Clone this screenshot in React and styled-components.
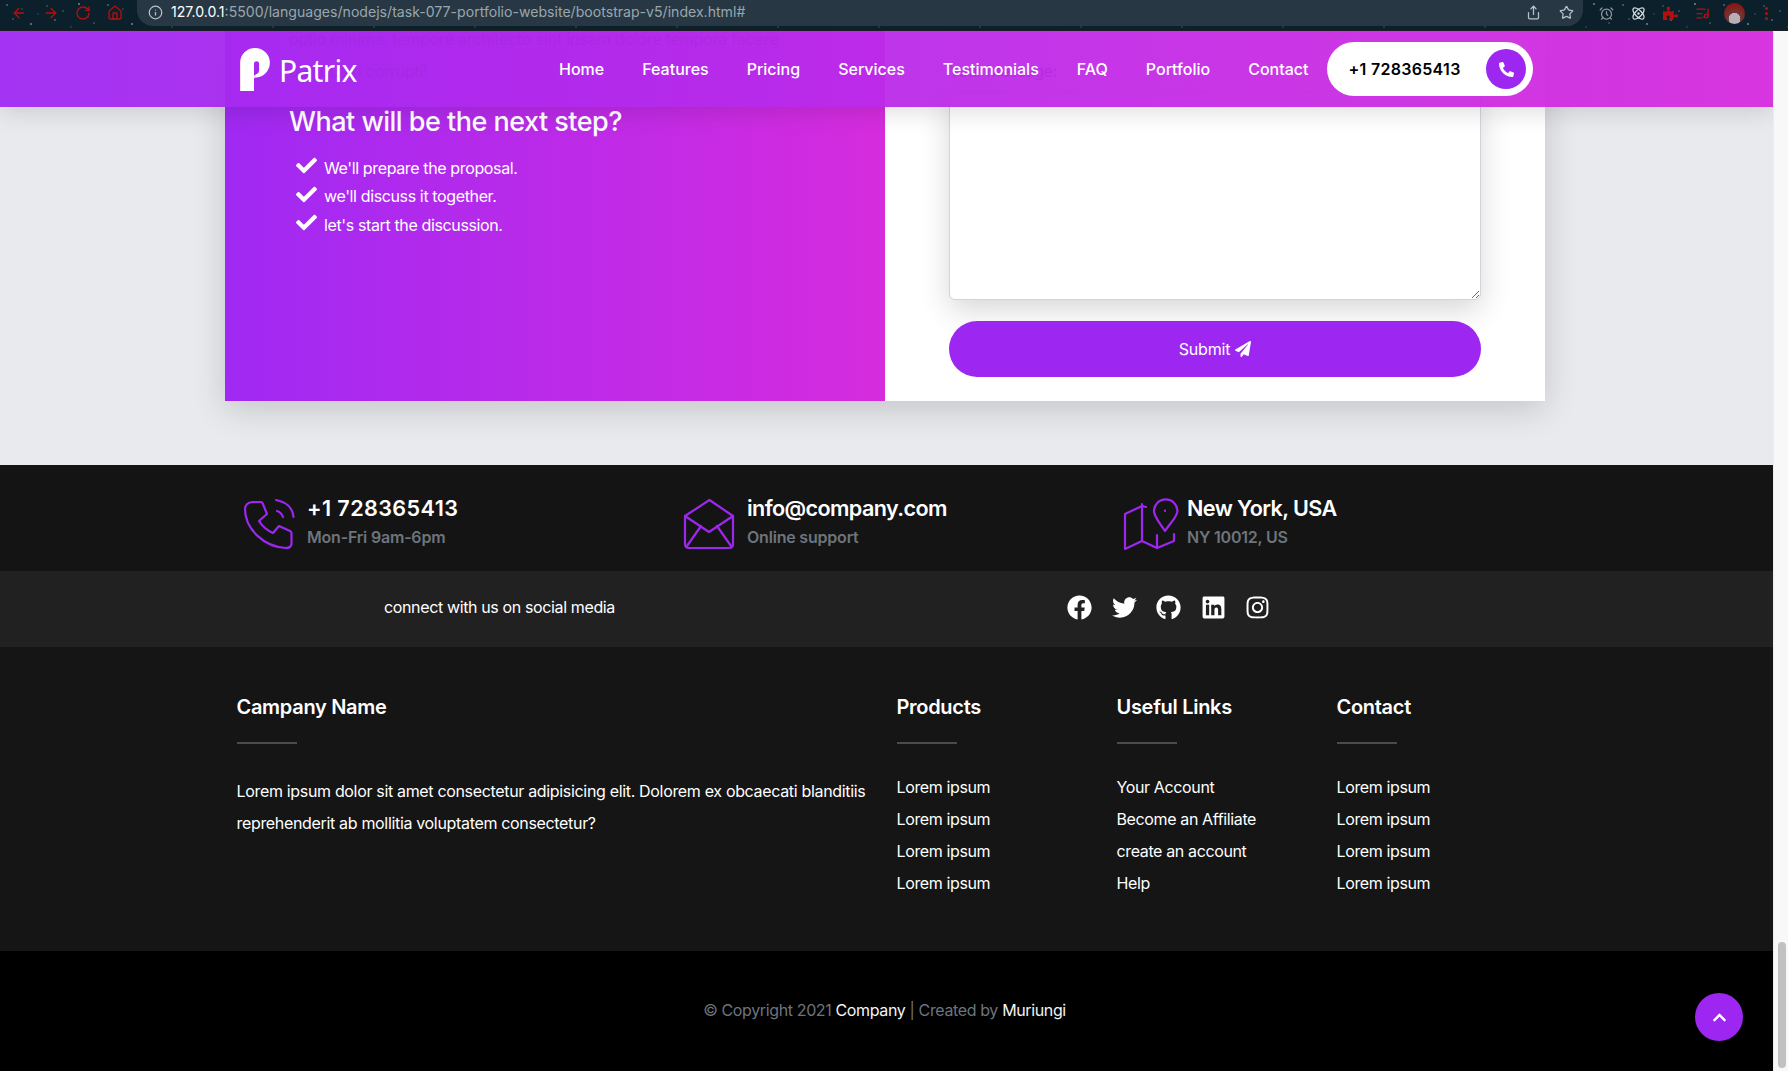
import React from "react";
import styled, { createGlobalStyle } from "styled-components";
import {
  ArrowLeft, ArrowRight, RotateCw, Home, Info, Share, Star, AlarmClock, Atom, ListMusic,
} from "lucide-react";
import {
  FaCheck, FaFacebook, FaTwitter, FaGithub, FaLinkedin, FaInstagram, FaPaperPlane, FaPhoneAlt, FaChevronUp, FaPuzzlePiece,
} from "react-icons/fa";

const Global = createGlobalStyle`
  html, body { margin: 0; padding: 0; background: #e9eaee; }
  body { font-family: Inter, "Liberation Sans", sans-serif; font-size: 16px; line-height: 1.5; color: #fff; letter-spacing: -0.37px; }
  * { box-sizing: border-box; }
`;

const Window = styled.div`
  height: 1071px;
  width: 1788px;
  display: flex;
  flex-direction: column;
  overflow: hidden;
`;

const stars = [
  [7,5],[13,19],[22,9],[31,24],[38,14],[47,6],[55,20],[63,11],[71,27],[79,4],[88,17],[94,23],
].map(([x,y],i)=>`radial-gradient(${i%3===0?1.3:0.9}px ${i%3===0?1.3:0.9}px at ${x}px ${y}px, ${i%2?"#a9c6d6":"#6f93a6"}, transparent)`).join(",");

const BrowserBar = styled.header`
  height: 31px;
  flex: none;
  display: flex;
  align-items: flex-start;
  border-bottom: 1px solid #1c1c24;
  background-color: #0c202c;
  background-image: ${stars};
  background-size: 101px 31px;
`;

const NavIcons = styled.div`
  width: 137px;
  flex: none;
  height: 26px;
  padding-left: 11px;
  display: flex;
  align-items: center;
  gap: 16px;
  color: #b40f0f;
  svg { width: 16px; height: 16px; }
`;

const UrlPill = styled.div`
  flex: none;
  width: 1446px;
  height: 26px;
  background: #273844;
  border-radius: 0 0 16px 16px;
  display: flex;
  align-items: center;
  padding: 0 10px 2px 11px;
  color: #b9c2c7;
  svg { width: 15px; height: 15px; flex: none; }
`;

const Url = styled.div`
  margin-left: 8px;
  font-size: 14.1px;
  letter-spacing: 0;
  color: #9aa6ad;
  flex: 1;
  white-space: nowrap;
`;

const UrlHost = styled.span`
  color: #fff;
`;

const PillActions = styled.div`
  display: flex;
  gap: 18px;
  align-items: center;
  margin-right: -1px;
`;

const Extensions = styled.div`
  flex: 1;
  height: 26px;
  display: flex;
  align-items: center;
  padding-left: 16px;
  gap: 17px;
  svg { width: 15px; height: 15px; flex: none; }
`;

const Ext = styled.span`
  display: flex;
  color: ${(p) => p.$color};
`;

const Avatar = styled.span`
  width: 21px;
  height: 21px;
  margin-left: -3px;
  border-radius: 50%;
  background: radial-gradient(circle at 50% 75%, #b9aeb6 0 30%, #6b3a3a 32%, #8f1414 75%);
  flex: none;
`;

const Dots = styled.span`
  display: flex;
  flex-direction: column;
  gap: 2px;
  margin-left: 3px;
`;

const Dot = styled.i`
  display: block;
  width: 3px;
  height: 3px;
  border-radius: 50%;
  background: #b40f0f;
`;

const Viewport = styled.div`
  flex: 1;
  display: flex;
  min-height: 0;
`;

const PageArea = styled.div`
  position: relative;
  width: 1773px;
  flex: none;
  overflow: hidden;
`;

const Scrollbar = styled.div`
  flex: 1;
  background: #f8f8f8;
  border-left: 1px solid #ececec;
  display: flex;
  justify-content: center;
  align-items: flex-end;
  padding: 0 0 3px 1px;
`;

const Thumb = styled.div`
  width: 8px;
  height: 126px;
  border-radius: 4px;
  background: #c1c1c1;
`;

const Navbar = styled.nav`
  position: absolute;
  z-index: 5;
  top: 0;
  left: 0;
  right: 0;
  height: 76px;
  padding: 0 12px 0 240px;
  display: flex;
  align-items: center;
  background: linear-gradient(90deg, rgba(160, 41, 243, 0.95), rgba(214, 44, 222, 0.95));
  box-shadow: 0 4px 24px rgba(0, 0, 0, 0.14);
`;

const Brand = styled.div`
  display: flex;
  align-items: center;
  width: 319px;
  gap: 9px;
`;

const BrandName = styled.span`
  font-family: "Noto Sans", "Open Sans", sans-serif;
  font-size: 30px;
  letter-spacing: -0.7px;
  line-height: 1;
  color: #fff;
  margin-top: 3px;
`;

const NavLinks = styled.ul`
  list-style: none;
  margin: 0;
  padding: 0;
  display: flex;
  gap: 38px;
`;

const NavLink = styled.li`
  font-weight: 500;
  font-size: 16px;
  letter-spacing: 0;
  color: #fff;
`;

const PhonePill = styled.div`
  margin-left: 19px;
  width: 206px;
  height: 54px;
  border-radius: 27px;
  background: #fff;
  color: #000;
  font-weight: 600;
  letter-spacing: 0.3px;
  display: flex;
  align-items: center;
  justify-content: space-between;
  padding: 0 7px 0 21px;
`;

const PhoneCircle = styled.span`
  width: 40px;
  height: 40px;
  border-radius: 50%;
  background: #9d27f1;
  color: #fff;
  display: flex;
  align-items: center;
  justify-content: center;
  svg { width: 15px; height: 15px; }
`;

const ContactSection = styled.section`
  margin-top: -8px;
  padding-bottom: 64px;
  background: #e9eaee;
`;

const Card = styled.div`
  width: 1320px;
  margin-left: 225px;
  display: grid;
  grid-template-columns: 660px 660px;
  height: 378px;
  box-shadow: 0 8px 32px rgba(0, 0, 0, 0.16);
`;

const InfoPanel = styled.div`
  background: linear-gradient(90deg, #a029f3, #d62cde);
  padding-left: 64px;
  color: #fff;
`;

const GhostText = styled.p`
  margin: 0 0 18px;
  line-height: 32px;
  font-size: 16px;
  letter-spacing: -0.2px;
  width: 500px;
  color: #111;
`;

const NextStep = styled.h3`
  margin: 0 0 15px;
  font-size: 27px;
  font-weight: 500;
  letter-spacing: -0.52px;
  line-height: 33.6px;
`;

const Steps = styled.ul`
  list-style: none;
  margin: 0;
  padding: 0 0 0 7px;
`;

const Step = styled.li`
  height: 28.5px;
  display: flex;
  align-items: center;
  gap: 7px;
  svg { width: 21px; height: 21px; flex: none; margin-top: -4px; }
`;

const FormPanel = styled.form`
  background: #fff;
  padding: 36px 64px 24px;
  display: flex;
  flex-direction: column;
`;

const Label = styled.label`
  color: #212529;
  height: 24px;
  margin-bottom: 8px;
`;

const Message = styled.textarea`
  height: 209px;
  margin-bottom: 21px;
  border: 1px solid #ced4da;
  border-radius: 6px;
  background: #fff;
  box-shadow: 0 10px 30px rgba(0, 0, 0, 0.16);
  outline: none;
  resize: vertical;
`;

const Submit = styled.button`
  height: 56px;
  border: none;
  border-radius: 28px;
  background: #9d27f1;
  color: #fff;
  font: 400 16px Inter, sans-serif;
  letter-spacing: -0.2px;
  display: flex;
  align-items: center;
  justify-content: center;
  gap: 5px;
  svg { width: 16px; height: 16px; }
`;

const ContactStrip = styled.section`
  height: 106px;
  background: #141414;
  padding-left: 225px;
  display: grid;
  grid-template-columns: repeat(3, 440px);
`;

const ContactItem = styled.div`
  display: flex;
  align-items: flex-start;
  gap: 13px;
  padding: 34px 0 0 19px;
`;

const IconBox = styled.div`
  width: 50px;
  height: 50px;
  flex: none;
  svg { display: block; overflow: visible; }
`;

const ContactTitle = styled.div`
  font-size: 21.6px;
  font-weight: 600;
  line-height: 27px;
  margin-top: -4px;
  letter-spacing: ${(p) => (p.$digits ? "0.4px" : "-0.6px")};
`;

const ContactSub = styled.div`
  color: #6c757d;
  font-weight: 600;
  font-size: 16px;
  letter-spacing: -0.2px;
  line-height: 24px;
  margin-top: 3px;
`;

const SocialStrip = styled.section`
  height: 76px;
  background: #212121;
  padding: 0 0 4px 225px;
  display: grid;
  grid-template-columns: 549px 1fr;
  align-items: center;
`;

const SocialText = styled.div`
  text-align: center;
`;

const SocialIcons = styled.div`
  display: flex;
  align-items: center;
  gap: 19.5px;
  padding-left: 293px;
  svg { height: 25px; width: auto; display: block; }
`;

const FooterMain = styled.footer`
  height: 304px;
  background: #151515;
  padding: 44px 0 0 224.5px;
  display: grid;
  grid-template-columns: 660px 220px 220px 220px;
`;

const FooterCol = styled.div`
  padding: 0 12px;
`;

const FooterTitle = styled.h6`
  margin: 0;
  font-size: 20px;
  font-weight: 600;
  letter-spacing: -0.3px;
  line-height: 32px;
`;

const Rule = styled.div`
  width: 60px;
  height: 2px;
  background: #4b4b4b;
  margin: 19px 0 ${(p) => p.$after}px;
`;

const FooterParagraph = styled.p`
  margin: 0;
  line-height: 32px;
  letter-spacing: -0.33px;
`;

const LinkList = styled.ul`
  list-style: none;
  margin: 0;
  padding: 0;
`;

const LinkItem = styled.li`
  line-height: 32px;
`;

const CopyBar = styled.div`
  height: 120px;
  background: #000;
  color: #6c757d;
  text-align: center;
  padding: 47px 4px 0 0;
`;

const CopyLink = styled.span`
  color: #f4f4f4;
`;

const TopButton = styled.button`
  position: absolute;
  right: 30px;
  bottom: 30px;
  width: 48px;
  height: 48px;
  border: none;
  border-radius: 50%;
  background: #9d27f1;
  color: #fff;
  display: flex;
  align-items: center;
  justify-content: center;
  z-index: 6;
  svg { width: 15px; height: 15px; }
`;

const PLogo = () => (
  <svg width="30" height="43" viewBox="0 0 29 42" fill="#fff">
    <path
      fillRule="evenodd"
      d="M0 42V14.5A14.5 14.5 0 0 1 29 14.5 14.5 14.5 0 0 1 14.5 29H13.5V42ZM13.5 27V15.5A2.5 2.5 0 0 1 18.5 15.5V22Q18.5 24.5 16 25.5Z"
    />
  </svg>
);

const stroke = { fill: "none", stroke: "#9d27f1", strokeWidth: 2.2, strokeLinecap: "round", strokeLinejoin: "round" };

const PhoneLine = () => (
  <svg width="50" height="50" viewBox="0 0 50 50" {...stroke}>
    <path d="M8 3H17Q18 3 18.5 4L23 15 15 22Q20 30 29 34L35 27 46 32Q47.5 33 47.5 34V45Q47 49 42 49C20 48 1 30 1 10 1 6 3 4 8 3Z" />
    <path d="M32 1C42 3 49 9 49.5 18" />
    <path d="M33 12C36 13 38 15 39 18" />
  </svg>
);

const MailLine = () => (
  <svg width="50" height="50" viewBox="0 0 50 50" {...stroke}>
    <path d="M1 17 25.5 1 49 17V45Q49 49 45 49H5Q1 49 1 45Z" />
    <path d="M1 17 25 33 49 17" />
    <path d="M3 47 17 27" />
    <path d="M47 47 33 27" />
  </svg>
);

const MapLine = () => (
  <svg width="54" height="52" viewBox="0 0 54 52" {...stroke}>
    <path d="M41 32C36 24 30 18 30 12A11.7 11.7 0 0 1 53.4 12C53.4 18 46 24 41 32Z" />
    <path d="M41 11.5V12" />
    <path d="M22 8 18 7 1 15V50L18 42 33 49 50 42V35" />
    <path d="M18 5V42" />
    <path d="M33 36V49" />
  </svg>
);

const navItems = ["Home", "Features", "Pricing", "Services", "Testimonials", "FAQ", "Portfolio", "Contact"];
const stepsText = ["We'll prepare the proposal.", "we'll discuss it together.", "let's start the discussion."];
const lorem = ["Lorem ipsum", "Lorem ipsum", "Lorem ipsum", "Lorem ipsum"];
const columns = [
  ["Products", lorem],
  ["Useful Links", ["Your Account", "Become an Affiliate", "create an account", "Help"]],
  ["Contact", lorem],
];
const contacts = [
  [<PhoneLine key="p" />, "+1 728365413", "Mon-Fri 9am-6pm", true],
  [<MailLine key="m" />, "info@company.com", "Online support", false],
  [<MapLine key="l" />, "New York, USA", "NY 10012, US", false],
];

export default function App() {
  return (
    <Window>
      <Global />
      <BrowserBar>
        <NavIcons>
          <ArrowLeft />
          <ArrowRight />
          <RotateCw />
          <Home />
        </NavIcons>
        <UrlPill>
          <Info />
          <Url>
            <UrlHost>127.0.0.1</UrlHost>:5500/languages/nodejs/task-077-portfolio-website/bootstrap-v5/index.html#
          </Url>
          <PillActions>
            <Share />
            <Star />
          </PillActions>
        </UrlPill>
        <Extensions>
          <Ext $color="#8f9a9f"><AlarmClock /></Ext>
          <Ext $color="#d8dde0"><Atom /></Ext>
          <Ext $color="#b40f0f"><FaPuzzlePiece /></Ext>
          <Ext $color="#b40f0f"><ListMusic /></Ext>
          <Avatar />
          <Dots><Dot /><Dot /><Dot /></Dots>
        </Extensions>
      </BrowserBar>
      <Viewport>
        <PageArea>
          <Navbar>
            <Brand>
              <PLogo />
              <BrandName>Patrix</BrandName>
            </Brand>
            <NavLinks>
              {navItems.map((n) => <NavLink key={n}>{n}</NavLink>)}
            </NavLinks>
            <PhonePill>
              +1 728365413
              <PhoneCircle><FaPhoneAlt /></PhoneCircle>
            </PhonePill>
          </Navbar>
          <ContactSection>
            <Card>
              <InfoPanel>
                <GhostText>optio minima, tempore architecto sint ipsam dolore tempora facere quisquam corrupti!</GhostText>
                <NextStep>What will be the next step?</NextStep>
                <Steps>
                  {stepsText.map((s) => (
                    <Step key={s}><FaCheck />{s}</Step>
                  ))}
                </Steps>
              </InfoPanel>
              <FormPanel>
                <Label>Your Message:</Label>
                <Message />
                <Submit type="button">Submit <FaPaperPlane /></Submit>
              </FormPanel>
            </Card>
          </ContactSection>
          <ContactStrip>
            {contacts.map(([icon, title, sub, digits]) => (
              <ContactItem key={title}>
                <IconBox>{icon}</IconBox>
                <div>
                  <ContactTitle $digits={digits}>{title}</ContactTitle>
                  <ContactSub>{sub}</ContactSub>
                </div>
              </ContactItem>
            ))}
          </ContactStrip>
          <SocialStrip>
            <SocialText>connect with us on social media</SocialText>
            <SocialIcons>
              <FaFacebook />
              <FaTwitter />
              <FaGithub />
              <FaLinkedin />
              <FaInstagram />
            </SocialIcons>
          </SocialStrip>
          <FooterMain>
            <FooterCol>
              <FooterTitle>Campany Name</FooterTitle>
              <Rule $after={31} />
              <FooterParagraph>
                Lorem ipsum dolor sit amet consectetur adipisicing elit. Dolorem ex obcaecati blanditiis reprehenderit ab mollitia voluptatem consectetur?
              </FooterParagraph>
            </FooterCol>
            {columns.map(([title, items]) => (
              <FooterCol key={title}>
                <FooterTitle>{title}</FooterTitle>
                <Rule $after={27} />
                <LinkList>
                  {items.map((it, i) => <LinkItem key={i}>{it}</LinkItem>)}
                </LinkList>
              </FooterCol>
            ))}
          </FooterMain>
          <CopyBar>
            © Copyright 2021 <CopyLink>Company</CopyLink> | Created by <CopyLink>Muriungi</CopyLink>
          </CopyBar>
          <TopButton type="button"><FaChevronUp /></TopButton>
        </PageArea>
        <Scrollbar><Thumb /></Scrollbar>
      </Viewport>
    </Window>
  );
}
